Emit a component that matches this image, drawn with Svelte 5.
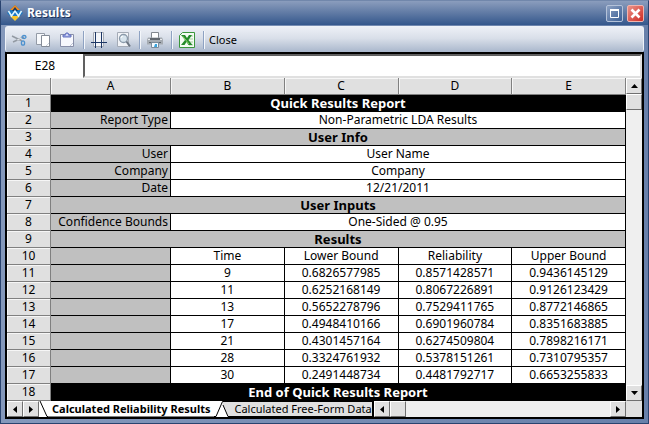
<script>
  const columns = ["A", "B", "C", "D", "E"];

  const rows = [
    { kind: "banner", text: "Quick Results Report" },
    { kind: "field", label: "Report Type", text: "Non-Parametric LDA Results" },
    { kind: "section", text: "User Info" },
    { kind: "field", label: "User", text: "User Name" },
    { kind: "field", label: "Company", text: "Company" },
    { kind: "field", label: "Date", text: "12/21/2011" },
    { kind: "section", text: "User Inputs" },
    { kind: "field", label: "Confidence Bounds", text: "One-Sided @ 0.95" },
    { kind: "section", text: "Results" },
    { kind: "data", cells: ["Time", "Lower Bound", "Reliability", "Upper Bound"] },
    { kind: "data", cells: ["9", "0.6826577985", "0.8571428571", "0.9436145129"] },
    { kind: "data", cells: ["11", "0.6252168149", "0.8067226891", "0.9126123429"] },
    { kind: "data", cells: ["13", "0.5652278796", "0.7529411765", "0.8772146865"] },
    { kind: "data", cells: ["17", "0.4948410166", "0.6901960784", "0.8351683885"] },
    { kind: "data", cells: ["21", "0.4301457164", "0.6274509804", "0.7898216171"] },
    { kind: "data", cells: ["28", "0.3324761932", "0.5378151261", "0.7310795357"] },
    { kind: "data", cells: ["30", "0.2491448734", "0.4481792717", "0.6653255833"] },
    { kind: "banner", text: "End of Quick Results Report" }
  ];

  let formula = $state("");
</script>

<main class="window">
  <header class="titlebar">
    <svg width="16" height="16" viewBox="0 0 16 16" aria-hidden="true">
      <path d="M8 0l8 8-8 8-8-8z" fill="#1c78c4" />
      <path d="M8 0l5 5H3z" fill="#f08a1c" />
      <path d="M8 2l3 4H5z" fill="#173a63" />
      <path d="M3 11h10l-5 5z" fill="#f9c32c" />
      <path d="M1.5 6l3 5L8 6l3.500 5 3-5" fill="none" stroke="#dff6ff" stroke-width="1.5" />
    </svg>
    <h1>Results</h1>
    <button class="win-btn" aria-label="Maximize">
      <svg width="15" height="15" viewBox="0 0 15 15"><path d="M3.5 3.5h8v8h-8z" fill="none" stroke="#fff" /><path d="M3 4h9" stroke="#fff" stroke-width="2" /></svg>
    </button>
    <button class="win-btn close" aria-label="Close window">
      <svg width="15" height="15" viewBox="0 0 15 15"><path d="M3.5 3.5l8 8m0-8l-8 8" stroke="#fff" stroke-width="2.6" /></svg>
    </button>
  </header>

  <div class="toolbar" role="toolbar" aria-label="Report tools">
    <button aria-label="Cut">
      <svg width="16" height="16" viewBox="0 0 16 16">
        <path d="M1 4l10 5M2 10l11-5" stroke="#939aa3" stroke-width="1.5" />
        <path d="M6 8l5-2" stroke="#e4e7ea" />
        <ellipse cx="13" cy="5" rx="2" ry="1.5" fill="none" stroke="#4c91cf" stroke-width="1.3" />
        <ellipse cx="12" cy="11" rx="1.6" ry="2.2" fill="none" stroke="#4c91cf" stroke-width="1.3" />
      </svg>
    </button>
    <button aria-label="Copy">
      <svg width="16" height="16" viewBox="0 0 16 16">
        <path d="M1.5 1.5h8v11h-8z" fill="#f7f9fc" stroke="#939aa6" />
        <path d="M6.5 3.5h8v11h-8z" fill="#fff" stroke="#858c98" />
        <path d="M11 14l3-3" stroke="#ccd3de" />
      </svg>
    </button>
    <button aria-label="Paste">
      <svg width="16" height="16" viewBox="0 0 16 16">
        <path d="M1.5 2.5h13v12h-13z" fill="#f7f8fd" stroke="#888fa9" />
        <path d="M4 5V3h2l1-2h2l1 2h2v2z" fill="#9ba6e6" stroke="#6572be" />
        <path d="M7 3h2" stroke="#fff" />
        <path d="M11 14l3-3" stroke="#bcc3d4" />
      </svg>
    </button>
    <span class="sep"></span>
    <button aria-label="Page setup">
      <svg width="16" height="16" viewBox="0 0 16 16">
        <path d="M2.5.5h10v14h-10z" fill="#f3f5f9" stroke="#a7acb5" />
        <path d="M4.5 0v16M10.5 0v16M0 10.5h16" stroke="#1d3765" />
      </svg>
    </button>
    <button aria-label="Print preview">
      <svg width="16" height="16" viewBox="0 0 16 16">
        <path d="M2.5.5h11v14h-11z" fill="#f1f3f7" stroke="#a4abb6" />
        <circle cx="8.5" cy="6.5" r="4" fill="#d7e4ed" stroke="#8b9aaa" stroke-width="1.3" />
        <path d="M6 6q0-2 2-2" fill="none" stroke="#fff" />
        <path d="M11.5 9.5l3.5 5" stroke="#6c7683" stroke-width="2" />
      </svg>
    </button>
    <span class="sep"></span>
    <button aria-label="Print">
      <svg width="16" height="16" viewBox="0 0 16 16">
        <path d="M4.5.5h7v6h-7z" fill="#fff" stroke="#81878e" />
        <path d="M1 5.5h14l1 2v5H0v-5z" fill="#a5abb2" />
        <path d="M3 6h10v2H3z" fill="#62686f" />
        <path d="M2 10.5h12" stroke="#62686f" />
        <path d="M1 7.5h2M13 7.5h2" stroke="#e7e9ec" />
        <path d="M4.5 10.5h7v5h-7z" fill="#f5faff" stroke="#7c8c9a" />
        <path d="M8 12h2v3H7z" fill="#39a3dd" />
      </svg>
    </button>
    <span class="sep"></span>
    <button aria-label="Export to Excel">
      <svg width="16" height="16" viewBox="0 0 16 16">
        <path d="M3.5.5h12v15H.5v-12z" fill="#f5fbf4" stroke="#3b963d" />
        <path d="M10 4h4M10 7h4M10 10h4M10 13h4" stroke="#a5cf9f" />
        <path d="M2 3h4l2 3 2-3h3L9.5 8l4 5h-4L7.5 10l-2 3H2l4-5z" fill="#258b2b" />
        <path d="M3.5 4l6.5 8" stroke="#90d26d" />
      </svg>
    </button>
    <span class="sep"></span>
    <button class="text-btn">Close</button>
  </div>

  <section class="workbook">
    <div class="formula">
      <label for="formula">E28</label>
      <input id="formula" type="text" bind:value={formula} />
    </div>

    <div class="sheet">
      <div class="grid">
        <table>
          <colgroup>
            <col class="col-num" />
            <col class="col-a" />
            <col /><col /><col /><col />
          </colgroup>
          <thead>
            <tr>
              <th aria-label="Row"></th>
              {#each columns as column}
                <th scope="col">{column}</th>
              {/each}
            </tr>
          </thead>
          <tbody>
            {#each rows as row, i}
              <tr class={row.kind}>
                <th scope="row">{i + 1}</th>
                {#if row.kind === "field"}
                  <td class="label">{row.label}</td>
                  <td colspan="4">{row.text}</td>
                {:else if row.kind === "data"}
                  <td class="label"></td>
                  {#each row.cells as cell}
                    <td>{cell}</td>
                  {/each}
                {:else}
                  <td colspan="5">{row.text}</td>
                {/if}
              </tr>
            {/each}
          </tbody>
        </table>
      </div>

      <div class="vscroll">
        <button class="bevel" aria-label="Scroll up">
          <svg width="7" height="4" viewBox="0 0 7 4"><path d="M0 4l3.5-4L7 4z" /></svg>
        </button>
        <span class="bevel"></span>
        <button class="bevel end" aria-label="Scroll down">
          <svg width="7" height="4" viewBox="0 0 7 4"><path d="M0 0h7L3.5 4z" /></svg>
        </button>
      </div>
    </div>

    <footer>
      <button class="bevel" aria-label="Previous sheet">
        <svg width="4" height="7" viewBox="0 0 4 7"><path d="M4 0v7L0 3.5z" /></svg>
      </button>
      <button class="bevel" aria-label="Next sheet">
        <svg width="4" height="7" viewBox="0 0 4 7"><path d="M0 0v7l4-3.5z" /></svg>
      </button>
      <nav>
        <svg width="9" height="16" viewBox="0 0 9 16" aria-hidden="true"><path d="M1 0l7 15.5h1" fill="none" stroke="#000" /></svg>
        <button class="tab active">Calculated Reliability Results</button>
        <svg width="20" height="16" viewBox="0 0 20 16" aria-hidden="true">
          <path d="M8 .5h12v15h-6L9 5z" fill="#e0e0e0" />
          <path d="M0 15.5h2L8.5 .5H20M9 4l5 11.5h6" fill="none" stroke="#000" />
        </svg>
        <button class="tab">Calculated Free-Form Data</button>
      </nav>
      <div class="hscroll">
        <button class="bevel" aria-label="Scroll left">
          <svg width="4" height="7" viewBox="0 0 4 7"><path d="M4 0v7L0 3.5z" /></svg>
        </button>
        <span class="bevel"></span>
        <button class="bevel end" aria-label="Scroll right">
          <svg width="4" height="7" viewBox="0 0 4 7"><path d="M0 0v7l4-3.5z" /></svg>
        </button>
      </div>
      <span class="corner"></span>
    </footer>
  </section>
</main>

<style>
  :global(body) {
    background: #3d5f91;
  }

  .window {
    box-sizing: border-box;
    min-height: 100vh;
    padding: 0 4px 4px;
    border: 1px solid #29436f;
    border-top-color: #7187ab;
    background: linear-gradient(90deg, #8498bb, #6880aa);
    font-family: "Noto Sans", "Open Sans", sans-serif;
    font-size: 12px;
    line-height: 16px;
    color: #000;
  }

  button {
    box-sizing: border-box;
    display: flex;
    align-items: center;
    justify-content: center;
    margin: 0;
    padding: 0;
    border: 0;
    background: none;
    font: inherit;
    color: inherit;
  }

  .titlebar {
    display: flex;
    align-items: center;
    height: 24px;
    margin: 0 -4px;
    padding: 0 4px 0 6px;
    background: linear-gradient(#8b9dbd, #7188ae 30%, #34578c);
  }

  h1 {
    flex: 1;
    margin: 0 0 0 4px;
    font-size: 12px;
    font-weight: 700;
    color: #fff;
    text-shadow: 1px 1px 0 #1c3259;
  }

  .win-btn {
    width: 17px;
    height: 17px;
    margin-left: 4px;
    border: 1px solid #b4c2d9;
    border-radius: 2px;
    background: linear-gradient(135deg, #8da1c2, #3b5f95);
  }

  .win-btn.close {
    border-color: #f1b4ae;
    background: linear-gradient(135deg, #e99389, #cf2b24);
  }

  .toolbar {
    display: flex;
    align-items: center;
    gap: 8px;
    box-sizing: border-box;
    height: 26px;
    margin-top: 1px;
    padding: 0 5px;
    border: 1px solid #eef2f8;
    border-width: 1px 1px 0;
    border-radius: 3px;
    background: linear-gradient(#edf0f6, #d9dfe9 45%, #a9b7cc);
    font-size: 11px;
  }

  .sep {
    width: 1px;
    height: 18px;
    margin-right: -1px;
    background: #8ea2c2;
    box-shadow: 1px 0 0 #f4f7fb;
  }

  .text-btn {
    margin-left: -2px;
  }

  .workbook {
    padding-left: 1px;
    border: 2px solid #000;
    border-left-width: 1px;
    background: #e0e0e0;
    box-shadow: inset 1px 0 0 #000;
  }

  .formula {
    display: flex;
    height: 24px;
  }

  .formula label {
    width: 76px;
    background: #fff;
    text-align: center;
    line-height: 24px;
  }

  .formula input {
    flex: 1;
    min-width: 0;
    padding: 0 4px;
    border: 2px solid #e0e0e0;
    border-top-color: #606060;
    border-left-color: #606060;
    border-radius: 0;
    outline: 0;
    font: inherit;
    background: #fff;
  }

  .sheet {
    display: flex;
  }

  .grid {
    flex: 1;
    min-width: 0;
  }

  table {
    width: 100%;
    table-layout: fixed;
    border-collapse: separate;
    border-spacing: 0;
    background: #fff;
  }

  .col-num {
    width: 44px;
  }

  .col-a {
    width: 120px;
  }

  th,
  td {
    height: 16px;
    padding: 0;
    border: 0 solid #000;
    border-width: 0 1px 1px 0;
    line-height: 16px;
    text-align: center;
    white-space: nowrap;
    overflow: hidden;
  }

  th {
    border-color: #808080;
    background: #e0e0e0;
    font-weight: 400;
    box-shadow: inset 1px 1px 0 #f6f6f6;
  }

  .label {
    padding-right: 2px;
    background: #c0c0c0;
    text-align: right;
  }

  .section td,
  .banner td {
    font-size: 13px;
    font-weight: 700;
  }

  .section td {
    background: #c0c0c0;
  }

  .banner td {
    background: #000;
    color: #fff;
  }

  .vscroll {
    display: flex;
    flex-direction: column;
    width: 16px;
    background: #efefef;
  }

  .bevel {
    box-sizing: border-box;
    flex: none;
    width: 16px;
    height: 16px;
    border: 1px solid #fff;
    border-right-color: #707070;
    border-bottom-color: #707070;
    background: #e0e0e0;
  }

  .vscroll .end {
    margin-top: auto;
  }

  footer {
    display: flex;
    height: 16px;
    background: #e0e0e0;
  }

  nav {
    display: flex;
    background: #fff;
    border-right: 2px solid #000;
  }

  .tab {
    border: 1px solid #000;
    border-width: 1px 0;
    background: #e0e0e0;
    font-size: 11px;
    line-height: 14px;
    white-space: nowrap;
  }

  .tab.active {
    padding: 0 4px;
    border-color: #fff #fff #808080;
    background: #fff;
    font-weight: 700;
  }

  .hscroll {
    display: flex;
    flex: 1;
    background: #efefef;
  }

  .hscroll .end {
    margin-left: auto;
  }

  .corner {
    width: 16px;
    background: #e0e0e0;
  }
</style>
